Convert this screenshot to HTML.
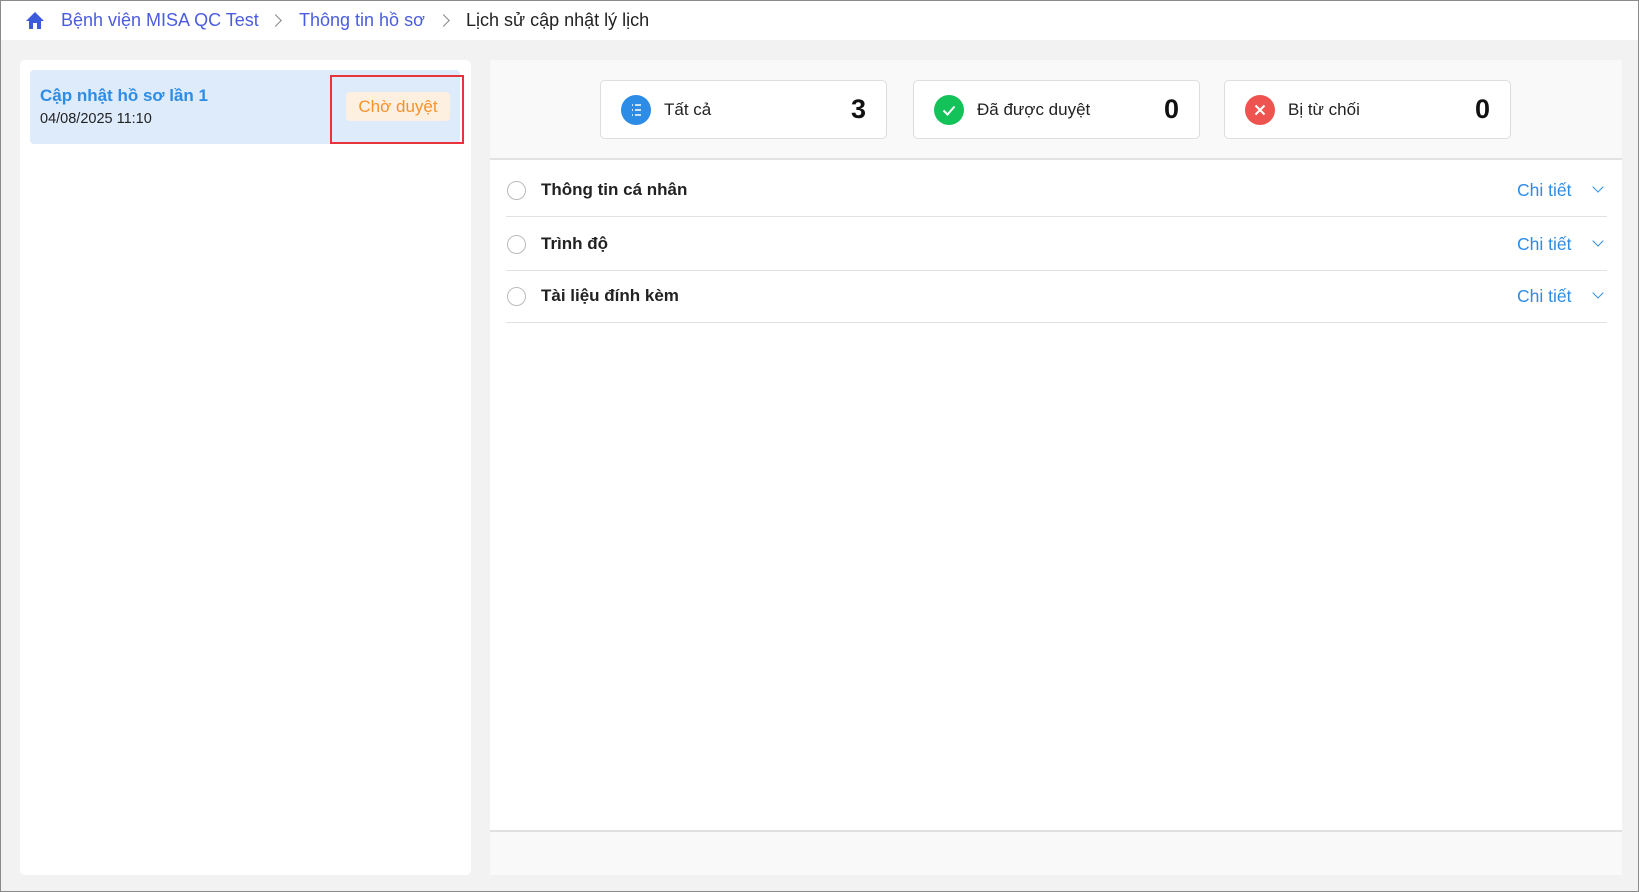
<!DOCTYPE html>
<html><head><meta charset="utf-8"><style>
*{box-sizing:border-box;margin:0;padding:0}
body{width:1639px;height:892px;overflow:hidden;background:#f2f2f2;font-family:"Liberation Sans",sans-serif;position:relative;border:1px solid #8a8a8a;}
.top{position:absolute;left:0;top:0;width:1637px;height:39px;background:#fff;}
.bc{position:absolute;top:9px;font-size:18px;color:#4a5ce0;white-space:nowrap}
.sep{position:absolute;top:15px;width:9px;height:9px;border-right:1.5px solid #888;border-top:1.5px solid #888;transform:rotate(45deg)}
.left{position:absolute;left:19px;top:59px;width:451px;height:815px;background:#fff;border-radius:5px}
.item{position:absolute;left:10px;top:10px;width:430px;height:74px;background:#deebfa;border-radius:4px}
.right{position:absolute;left:489px;top:59px;width:1132px;height:815px;background:#fff}
.head{position:absolute;left:0;top:0;width:100%;height:100px;background:#f9f9f9;border-bottom:2px solid #e2e2e2}
.card{position:absolute;top:20px;width:287px;height:59px;background:#fff;border:1px solid #ddd;border-radius:5px}
.ic{position:absolute;left:20px;top:14px;width:30px;height:30px;border-radius:50%}
.lbl{position:absolute;left:63px;top:19px;font-size:17px;color:#222}
.num{position:absolute;right:20px;top:13px;font-size:27px;font-weight:bold;color:#111}
.row{position:absolute;left:16px;width:1101px;height:53px;border-bottom:1.5px solid #e2e2e2}
.radio{position:absolute;left:1px;top:17px;width:19px;height:19px;border:1.5px solid #bbb;border-radius:50%}
.rl{position:absolute;left:35px;top:16px;font-size:17px;font-weight:bold;color:#222}
.ct{position:absolute;left:1011px;top:16px;font-size:17.5px;color:#2d8ce6}
.chev{position:absolute;left:1088px;top:19px;width:8px;height:8px;border-right:1.8px solid #2d8ce6;border-bottom:1.8px solid #2d8ce6;transform:rotate(45deg)}
.foot{position:absolute;left:0;top:770px;width:100%;height:45px;background:#f9f9f9;border-top:2px solid #e0e0e0}
</style></head><body>
<div class="top">
<svg style="position:absolute;left:24px;top:10px" width="20" height="19" viewBox="0 0 20 19"><path d="M10 1 L19 10 H16 V18 H12 V12 H8 V18 H4 V10 H1 Z" fill="#3b5bdb"/></svg>
<div class="bc" style="left:60px">Bệnh viện MISA QC Test</div>
<div class="sep" style="left:270px"></div>
<div class="bc" style="left:298px">Thông tin hồ sơ</div>
<div class="sep" style="left:438px"></div>
<div class="bc" style="left:465px;color:#222">Lịch sử cập nhật lý lịch</div>
</div>
<div class="left"><div class="item">
<div style="position:absolute;left:10px;top:16px;font-size:17px;font-weight:bold;color:#2d8ce6">Cập nhật hồ sơ lần 1</div>
<div style="position:absolute;left:10px;top:41px;font-size:14.5px;color:#222">04/08/2025 11:10</div>
<div style="position:absolute;left:316px;top:22px;width:104px;height:29px;background:#fdf0e1;border-radius:4px;color:#f5932b;font-size:17px;text-align:center;line-height:29px">Chờ duyệt</div>
</div>
<div style="position:absolute;left:310px;top:15px;width:134px;height:69px;border:2px solid #e8323c"></div>
</div>
<div class="right">
<div class="head">
<div class="card" style="left:110px"><div class="ic" style="background:#2d8ce6"><svg width="30" height="30"><g stroke="#fff" stroke-width="1.6"><path d="M11 10h1M14 10h6M11 15h1M14 15h6M11 20h1M14 20h6"/></g></svg></div><div class="lbl">Tất cả</div><div class="num">3</div></div>
<div class="card" style="left:423px"><div class="ic" style="background:#14c25a"><svg width="30" height="30"><path d="M9.5 15.5l4 4 7-8" stroke="#fff" stroke-width="2" fill="none"/></svg></div><div class="lbl">Đã được duyệt</div><div class="num">0</div></div>
<div class="card" style="left:734px"><div class="ic" style="background:#ef5350"><svg width="30" height="30"><path d="M10.5 10.5l9 9M19.5 10.5l-9 9" stroke="#fff" stroke-width="2"/></svg></div><div class="lbl">Bị từ chối</div><div class="num">0</div></div>
</div>
<div class="row" style="top:104px"><div class="radio"></div><div class="rl">Thông tin cá nhân</div><div class="ct">Chi tiết</div><div class="chev"></div></div>
<div class="row" style="top:158px"><div class="radio"></div><div class="rl">Trình độ</div><div class="ct">Chi tiết</div><div class="chev"></div></div>
<div class="row" style="top:210px"><div class="radio"></div><div class="rl">Tài liệu đính kèm</div><div class="ct">Chi tiết</div><div class="chev"></div></div>
<div class="foot"></div>
</div>
</body></html>
